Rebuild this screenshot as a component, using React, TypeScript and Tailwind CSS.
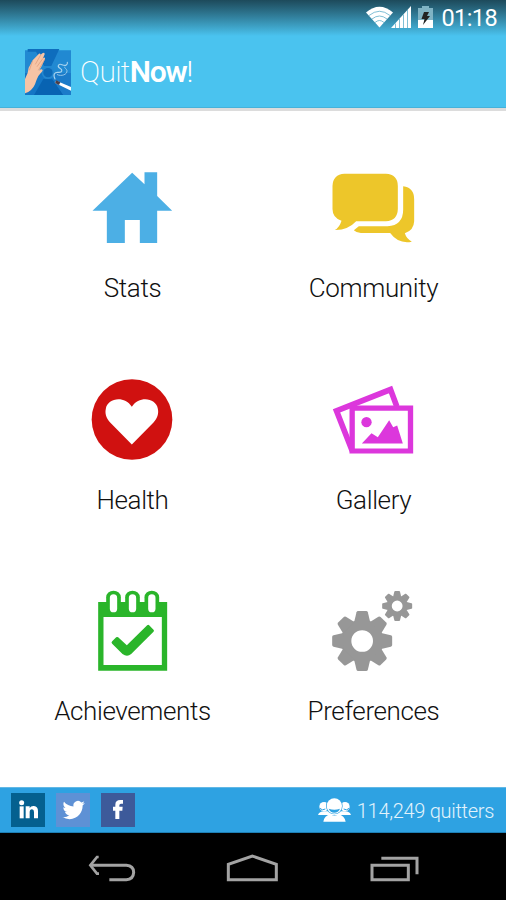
import type { ReactNode } from "react";

type MenuItem = {
  label: string;
  icon: ReactNode;
};

function HouseIcon() {
  return (
    <svg viewBox="37.5 21 240 240" className="size-20 overflow-visible" fill="#4cafe5">
      <path d="M39 152 L158 38 L195 73 V37 H233 V108 L278 152 H233 V249 H181 V180 H136 V249 H82 V152 Z" />
    </svg>
  );
}

function ChatIcon() {
  return (
    <svg viewBox="100.5 21 240 240" className="size-20 overflow-visible" fill="#edc62a">
      <path d="M135 41 H259 Q295 43 295 78 V147 Q294 182 259 184 H170 Q145 211 106 210 Q120 202 126 182 Q99 174 99 147 V78 Q100 43 135 41 Z" />
      <path d="M311 79 Q344 83 344 118 V184 Q343 211 316 220 Q321 237 337 245 Q297 253 272 219 H184 Q171 219 163 211 L178 199 H264 Q311 195 311 149 Z" />
    </svg>
  );
}

function HeartIcon() {
  return (
    <svg viewBox="37.5 25.5 240 240" className="size-20 overflow-visible">
      <circle cx="157.5" cy="147" r="121" fill="#d01110" />
      <path
        d="M157 222 L92 156 C79 142 76 128 79 115 C84 83 134 74 157 109 C180 74 230 83 235 115 C238 128 235 142 222 156 Z"
        fill="#fff"
      />
    </svg>
  );
}

function GalleryIcon() {
  return (
    <svg viewBox="40.5 25.5 240 240" className="size-20 overflow-visible">
      <path
        d="M98 241 L51 121 L213 57 L232 108"
        fill="none"
        stroke="#dc37dc"
        strokeWidth="17"
      />
      <path d="M90 105 H281 V249 H90 Z" fill="#dc37dc" />
      <path d="M106 121 H265 V234 H106 Z" fill="#fff" />
      <circle cx="141" cy="155" r="15.5" fill="#dc37dc" />
      <path d="M127 219 L156 188 L175 200 L209 149 L221 170 L233 165 L250 219 Z" fill="#dc37dc" />
    </svg>
  );
}

function CalendarIcon() {
  return (
    <svg viewBox="157.5 30 240 240" className="size-20 overflow-visible">
      <path d="M176 66 H383 V272 H176 Z" fill="#2ab52a" />
      <path d="M192 111 H367 V255 H192 Z" fill="#fff" />
      {[222, 279, 337].map((x) => (
        <g key={x}>
          <path d={`M${x - 22} 67 V52 a22 20 0 0 1 44 0 V67 Z`} fill="#2ab52a" />
          <rect x={x - 11} y="43" width="22" height="54" rx="11" fill="#fff" />
        </g>
      ))}
      <path
        d="M218 184 L230 172 Q233 170 236 172 L262 196 L323 136 Q326 133 329 136 L342 149 Q345 152 342 155 L275 222 Q263 233 249 222 L218 191 Q214 188 218 184 Z"
        fill="#2ab52a"
      />
    </svg>
  );
}

function Gear({ transform }: { transform: string }) {
  return (
    <g transform={transform}>
      <circle r="48" fill="none" stroke="#979797" strokeWidth="31" />
      {[0, 45, 90, 135, 180, 225, 270, 315].map((angle) => (
        <path
          key={angle}
          transform={`rotate(${angle})`}
          d="M-24 -57 L-17 -86 Q-16 -90 -12 -90 H12 Q16 -90 17 -86 L24 -57 Z"
          fill="#979797"
        />
      ))}
    </g>
  );
}

function GearsIcon() {
  return (
    <svg viewBox="100.5 30 240 240" className="size-20 overflow-visible">
      <Gear transform="translate(188 183)" />
      <Gear transform="translate(293 78) scale(.5)" />
    </svg>
  );
}

const MENU: MenuItem[] = [
  { label: "Stats", icon: <HouseIcon /> },
  { label: "Community", icon: <ChatIcon /> },
  { label: "Health", icon: <HeartIcon /> },
  { label: "Gallery", icon: <GalleryIcon /> },
  { label: "Achievements", icon: <CalendarIcon /> },
  { label: "Preferences", icon: <GearsIcon /> },
];

function StatusBar() {
  return (
    <div className="flex h-9 items-center justify-end bg-linear-to-b from-[#1d4a5b] to-[#4ac3ef] pr-[9px]">
      <svg viewBox="0 0 46 22" className="mb-0.5 h-[22px] w-[46px]" fill="#fff">
        <path d="M0 6.500 Q13.500 -5 27 6.500 L13.500 21.500 Z" />
        <g fill="none" stroke="#5fafca" strokeWidth=".8">
          <path d="M3 9.500 Q13.500 1 24 9.500" />
          <path d="M6 13 Q13.500 7 21 13" />
          <path d="M9 16.500 Q13.500 12.500 18 16.500" />
        </g>
        <path d="M25 22 L45 0 V22 Z" />
        <path
          d="M29.500 17.500 V22 M33.500 13 V22 M37.500 8.500 V22 M41.500 4 V22"
          stroke="#5fafca"
          strokeWidth=".8"
        />
      </svg>
      <svg viewBox="0 0 15 22" className="mb-0.5 ml-1.5 h-[22px] w-[15px]">
        <path d="M4 0 H11 V2 H15 V14 H0 V2 H4 Z" fill="#7fb3c4" />
        <path d="M0 14 H15 V22 H0 Z" fill="#fff" />
        <path d="M6 6 L11 6 L9 10 L12 10 L5 19 L6.500 13 L3.500 13 Z" fill="#222" />
      </svg>
      <span className="ml-2 text-[23.5px] leading-9 font-normal tracking-[-0.6px] text-white">01:18</span>
    </div>
  );
}

function AppLogo() {
  return (
    <svg viewBox="75 56 138 138" className="h-[46px] w-[46px] overflow-visible">
      <path d="M75 60 H213 V194 H75 Z" fill="#2189d2" />
      <path d="M75 128 H213 V194 H75 Z" fill="#1476c5" />
      <path d="M83 56 H178 L154 107 H132 L108 64 H83 Z" fill="#0e6dbd" />
      <path d="M130 146 L102 194 H190 L157 147 Z" fill="#0863b2" />
      <path d="M157 128 H213 V194 H190 L155 142 Z" fill="#1b7bc9" />
      <circle cx="144" cy="127" r="19" fill="#2387d0" />
      <circle cx="144" cy="127" r="14" fill="#0d6ab8" />
      <path
        d="M75 146 Q85 128 86 112 L98 90 L114 73 Q120 66 122 73 L127 69 Q134 65 134 72 L129 84 Q136 78 135 86 L124 109 L117 121 Q126 113 128 121 L115 137 Q109 149 105 162 Q96 183 75 189 Z"
        fill="#f7c4a5"
      />
      <path
        d="M122 74 L106 102 M129 84 L111 109 M134 87 L115 120 M98 91 L88 120"
        stroke="#d99777"
        strokeWidth="2"
        fill="none"
      />
      <g fill="none" stroke="#a9d3ee" strokeWidth="3.5" strokeLinecap="round">
        <path d="M165 146 C158 132 164 125 175 126 C188 127 188 118 180 114 C170 108 176 99 186 103 C196 107 204 105 202 96" />
        <path d="M172 133 C184 139 202 133 201 121 C200 115 192 113 194 110" strokeWidth="2.5" />
      </g>
      <path d="M169 151 L213 170 V181 L164 157 Z" fill="#fff" />
      <path d="M169 150 L181 156 L177 164 L165 158 Z" fill="#4b3e48" />
    </svg>
  );
}

function LinkedInButton() {
  return (
    <svg viewBox="33 39 102 102" className="size-[34px]">
      <path d="M33 39 H135 V141 H33 Z" fill="#04608f" />
      <g fill="#fff">
        <circle cx="65" cy="68" r="7.500" />
        <path d="M59 79 H71 V115 H59 Z" />
        <path d="M77 79 H89 V84 Q93 77 102 78 Q114 79 114 94 V115 H102 V96 Q102 88 96 88 Q89 88 89 97 V115 H77 Z" />
      </g>
    </svg>
  );
}

function TwitterButton() {
  return (
    <svg viewBox="168 39 102 102" className="size-[34px]">
      <path d="M168 39 H270 V141 H168 Z" fill="#5e91d5" />
      <path
        transform="translate(187.500 56.500) scale(2.800)"
        d="M23.953 4.570a10 10 0 01-2.825.775 4.958 4.958 0 002.163-2.723c-.951.555-2.005.959-3.127 1.184a4.920 4.920 0 00-8.384 4.482C7.690 8.095 4.067 6.130 1.640 3.162a4.822 4.822 0 00-.666 2.475c0 1.710.870 3.213 2.188 4.096a4.904 4.904 0 01-2.228-.616v.060a4.923 4.923 0 003.946 4.827 4.996 4.996 0 01-2.212.085 4.936 4.936 0 004.604 3.417 9.867 9.867 0 01-6.102 2.105c-.390 0-.779-.023-1.170-.067a13.995 13.995 0 007.557 2.209c9.053 0 13.998-7.496 13.998-13.985 0-.210 0-.420-.015-.630A9.935 9.935 0 0024 4.590z"
        fill="#fff"
      />
    </svg>
  );
}

function FacebookButton() {
  return (
    <svg viewBox="303 39 102 102" className="size-[34px]">
      <path d="M303 39 H405 V141 H303 Z" fill="#3d5a9a" />
      <path
        d="M346 117 V92 H339 V80 H346 V74 Q346 60 361 60 H369 V71 H363 Q358 71 358 76 V80 H368 L367 92 H358 V117 Z"
        fill="#fff"
      />
    </svg>
  );
}

function PeopleIcon() {
  return (
    <svg viewBox="54 53 99 72" className="h-6 w-[33px]" fill="#fff">
      <circle cx="72" cy="79" r="14" />
      <circle cx="135" cy="79" r="14" />
      <path d="M54 104 Q58 93 72 93 H135 Q149 93 153 104 Z" />
      <path d="M60 84 Q66 92 76 86 M147 84 Q141 92 131 86" fill="none" stroke="#2ea2e2" strokeWidth="3" />
      <circle cx="103" cy="77" r="25" fill="#2ea2e2" />
      <circle cx="103" cy="77" r="23" />
      <path d="M86 85 Q103 91 120 85 Q115 97 103 97 Q91 97 86 85 Z" fill="#2ea2e2" />
      <path d="M70 124 Q73 106 91 102 Q103 109 116 102 Q133 106 137 124 Z" />
    </svg>
  );
}

function NavBar() {
  return (
    <nav className="flex h-[67px] items-start bg-black pt-5 pl-[88px]">
      <svg viewBox="86 67 144 87" className="h-[29px] w-12" fill="none" stroke="#a3a3a3" strokeWidth="9">
        <path d="M118 79 H113 L93 104 L113 129 H119" strokeWidth="8" />
        <path d="M94 104 H201 Q223 106 223 125 Q222 146 201 147 H150" />
      </svg>
      <svg viewBox="497 67 162 87" className="ml-[89px] h-[29px] w-[54px]" fill="none" stroke="#a3a3a3" strokeWidth="9">
        <path d="M507 147 V101 L579 76 L651 101 V147 Z" />
      </svg>
      <svg viewBox="929 67 150 87" className="ml-[90px] h-[29px] w-[50px]" fill="none" stroke="#a3a3a3" strokeWidth="9">
        <path d="M938 104 H1047 V147 H938 Z" />
        <path d="M966 83 H1073 V131" />
      </svg>
    </nav>
  );
}

export default function App() {
  return (
    <div className="flex h-[900px] w-[506px] flex-col overflow-hidden bg-white font-['Roboto','Liberation_Sans',sans-serif]">
      <header className="h-[111px] shrink-0 border-b-3 border-[#dcdcdc] bg-[#4ac3ef]">
        <StatusBar />
        <div className="flex h-[72px] items-center border-b border-[#45b2da] pl-[25px]">
          <AppLogo />
          <h1 className="ml-[9px] text-[30px] leading-9 text-white">
            <span className="font-extralight tracking-[-0.7px]">Quit</span>
            <span className="font-semibold tracking-[-1.2px]">Now</span>
            <span className="font-light">!</span>
          </h1>
        </div>
      </header>

      <main className="grid h-[676px] shrink-0 auto-rows-[211.5px] grid-cols-2 overflow-hidden px-3 pt-14">
        {MENU.map((item) => (
          <button key={item.label} className="flex flex-col items-center">
            <span className="mr-px">{item.icon}</span>
            <span className="mt-[25px] text-[26px] leading-8 font-light tracking-[-0.38px] text-[#111]">
              {item.label}
            </span>
          </button>
        ))}
      </main>

      <footer className="flex h-[46px] shrink-0 items-center border-t border-b border-t-[#62b8e5] border-b-[#1e7fb5] bg-[#2ea2e2] pr-3 pl-[11px]">
        <div className="flex gap-[11px]">
          <LinkedInButton />
          <TwitterButton />
          <FacebookButton />
        </div>
        <div className="ml-auto flex items-center gap-1.5 text-[20px] leading-6 font-light tracking-[-0.3px] text-[#e2f3fc]">
          <PeopleIcon />
          <span className="pt-0.5">114,249 quitters</span>
        </div>
      </footer>

      <NavBar />
    </div>
  );
}
